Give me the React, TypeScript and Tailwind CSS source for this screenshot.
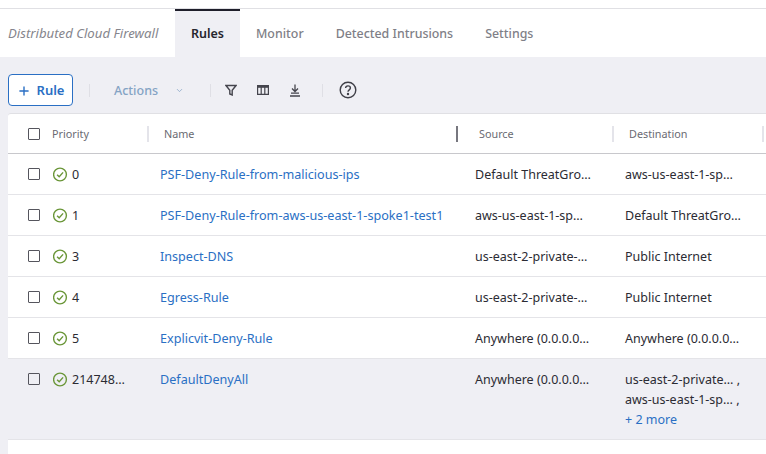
import { Plus, ChevronDown } from "lucide-react";

const rows = [
  { id: "0", name: "PSF-Deny-Rule-from-malicious-ips", source: "Default ThreatGro…", dest: "aws-us-east-1-sp…" },
  { id: "1", name: "PSF-Deny-Rule-from-aws-us-east-1-spoke1-test1", source: "aws-us-east-1-sp…", dest: "Default ThreatGro…" },
  { id: "3", name: "Inspect-DNS", source: "us-east-2-private-…", dest: "Public Internet" },
  { id: "4", name: "Egress-Rule", source: "us-east-2-private-…", dest: "Public Internet" },
  { id: "5", name: "Explicvit-Deny-Rule", source: "Anywhere (0.0.0.0…", dest: "Anywhere (0.0.0.0…" },
];

function Checkbox() {
  return <div className="h-3 w-3 shrink-0 rounded-[1px] border-[1.5px] border-[#55555d] bg-transparent" />;
}

function StatusIcon() {
  return (
    <svg width="15" height="15" viewBox="0 0 15 15" fill="none" className="shrink-0">
      <circle cx="7" cy="7.5" r="6.4" stroke="#6a9638" strokeWidth="1.4" />
      <path d="M4.1 7.7 6.2 9.8 10.1 5.4" stroke="#6a9638" strokeWidth="1.4" />
    </svg>
  );
}

function Divider() {
  return <div className="h-[13px] w-px bg-[#dfdfe5]" />;
}

function HeadCell({ label, width }: { label: string; width: string }) {
  return (
    <div className={`flex h-4 items-center pl-[15px] pt-[2px] ${width}`}>
      <span className="text-[10.8px] text-[#6a6a72]">{label}</span>
    </div>
  );
}

export default function App() {
  return (
    <div
      className="h-[454px] w-[766px] overflow-hidden bg-[#efeff4] text-[#2b2b33]"
      style={{ fontFamily: '"Noto Sans", sans-serif' }}
    >
      <div className="h-2 bg-white" />
      <div className="flex h-[49px] border-t border-[#e0e0e4] bg-white">
        <div className="flex w-[175px] items-center pl-2 pt-[2px] text-[13.2px] text-[#85858c] italic">
          Distributed Cloud Firewall
        </div>
        <div className="flex w-[65px] items-center justify-center border-t-2 border-[#1e1e2a] bg-[#efeff4] text-[12.5px] font-semibold text-[#26262e]">
          Rules
        </div>
        <div className="flex items-center gap-8 pl-4 pt-[2px] text-[12.4px] font-medium text-[#7f7f87]">
          <span>Monitor</span>
          <span>Detected Intrusions</span>
          <span>Settings</span>
        </div>
      </div>

      <div className="flex h-[56px] items-center pl-2 pt-[10px]">
        <button className="flex h-8 w-[65px] items-center justify-center gap-[6px] rounded-[4px] border-[1.5px] border-[#2a6fc4] bg-white pt-px text-[13px] font-semibold text-[#2a6fc4]">
          <Plus size={14} strokeWidth={2.4} />
          Rule
        </button>
        <div className="ml-4 mr-6">
          <Divider />
        </div>
        <span className="pt-[2px] text-[12.5px] font-medium text-[#84a3c4]">Actions</span>
        <ChevronDown size={9} strokeWidth={2} className="ml-[17px] text-[#84a3c4]" />
        <div className="ml-[26px] mr-3.5">
          <Divider />
        </div>
        <svg width="12" height="12" viewBox="0 0 12 12" fill="none" stroke="#45454d" strokeWidth="1.4">
          <path d="M1 1.5h10L7.2 6.2V11L4.8 10V6.2Z" />
        </svg>
        <svg width="12" height="10" viewBox="0 0 12 10" fill="none" stroke="#45454d" strokeWidth="1.2" className="ml-[20px]">
          <path d="M.6.6h10.8v8.8H.6ZM4.2.6v8.8M7.8.6v8.8" />
          <path d="M.6.6h10.8v1.6H.6Z" fill="#45454d" />
        </svg>
        <svg width="12" height="13" viewBox="0 0 12 13" fill="none" stroke="#45454d" strokeWidth="1.3" className="ml-[20px]">
          <path d="M6 .5v6.5M3 4.5 6 7.5 9 4.5M2 9.2h8M1 12h10" />
        </svg>
        <div className="ml-[21px] mr-4">
          <Divider />
        </div>
        <svg width="18" height="18" viewBox="0 0 18 18" fill="none" stroke="#3f3f47" strokeWidth="1.4">
          <circle cx="9" cy="9" r="7.8" />
          <path d="M6.6 7.1C6.6 5.7 7.6 4.9 9 4.9s2.4.9 2.4 2.1c0 1.9-2.4 1.8-2.4 3.8" />
          <circle cx="9" cy="13" r=".5" fill="#3f3f47" />
        </svg>
      </div>

      <div className="ml-2 h-[341px] rounded-tl-[3px] border-t border-[#e0e0e4] bg-white">
        <div className="flex h-10 items-center border-b border-[#c8c8cc]">
          <div className="flex w-[139px] items-center pl-5">
            <Checkbox />
            <span className="ml-3 pt-[2px] text-[10.8px] text-[#6a6a72]">Priority</span>
          </div>
          <div className="h-4 w-0.5 bg-[#e4e4ea]" />
          <HeadCell label="Name" width="w-[307px]" />
          <div className="h-4 w-0.5 bg-[#77777f]" />
          <div className="flex w-[154px] items-center pl-[21px] pt-[2px] text-[10.8px] text-[#6a6a72]">Source</div>
          <div className="h-4 w-0.5 bg-[#e4e4ea]" />
          <HeadCell label="Destination" width="w-[148px]" />
          <div className="h-4 w-0.5 bg-[#e4e4ea]" />
        </div>

        {rows.map((row) => (
          <div key={row.id} className="flex h-[41px] items-center border-b border-[#e4e4e8] text-[12.5px]">
            <div className="flex w-[152px] items-center pl-5">
              <Checkbox />
              <span className="ml-[13px]"><StatusIcon /></span>
              <span className="ml-1 pt-[2px]">{row.id}</span>
            </div>
            <div className="w-[315px] pt-[2px] text-[12.6px] text-[#2a6fc4]">{row.name}</div>
            <div className="w-[150px] pt-[2px]">{row.source}</div>
            <div className="pt-[2px]">{row.dest}</div>
          </div>
        ))}

        <div className="flex h-[81px] border-b border-[#e4e4e8] bg-[#efeff4] pt-2 text-[12.5px]">
          <div className="flex h-6 w-[152px] items-center pl-5">
            <Checkbox />
            <span className="ml-[13px]"><StatusIcon /></span>
            <span className="ml-1 pt-[2px]">214748…</span>
          </div>
          <div className="flex h-6 w-[315px] items-center pt-[2px] text-[12.6px] text-[#2a6fc4]">DefaultDenyAll</div>
          <div className="flex h-6 w-[150px] items-center pt-[2px]">Anywhere (0.0.0.0…</div>
          <div className="leading-5">
            <div className="flex h-6 items-center pt-[2px]">us-east-2-private… ,</div>
            <div className="flex h-[17px] items-center">aws-us-east-1-sp… ,</div>
            <div className="flex h-6 items-center text-[#2a6fc4]">+ 2 more</div>
          </div>
        </div>
      </div>
    </div>
  );
}
